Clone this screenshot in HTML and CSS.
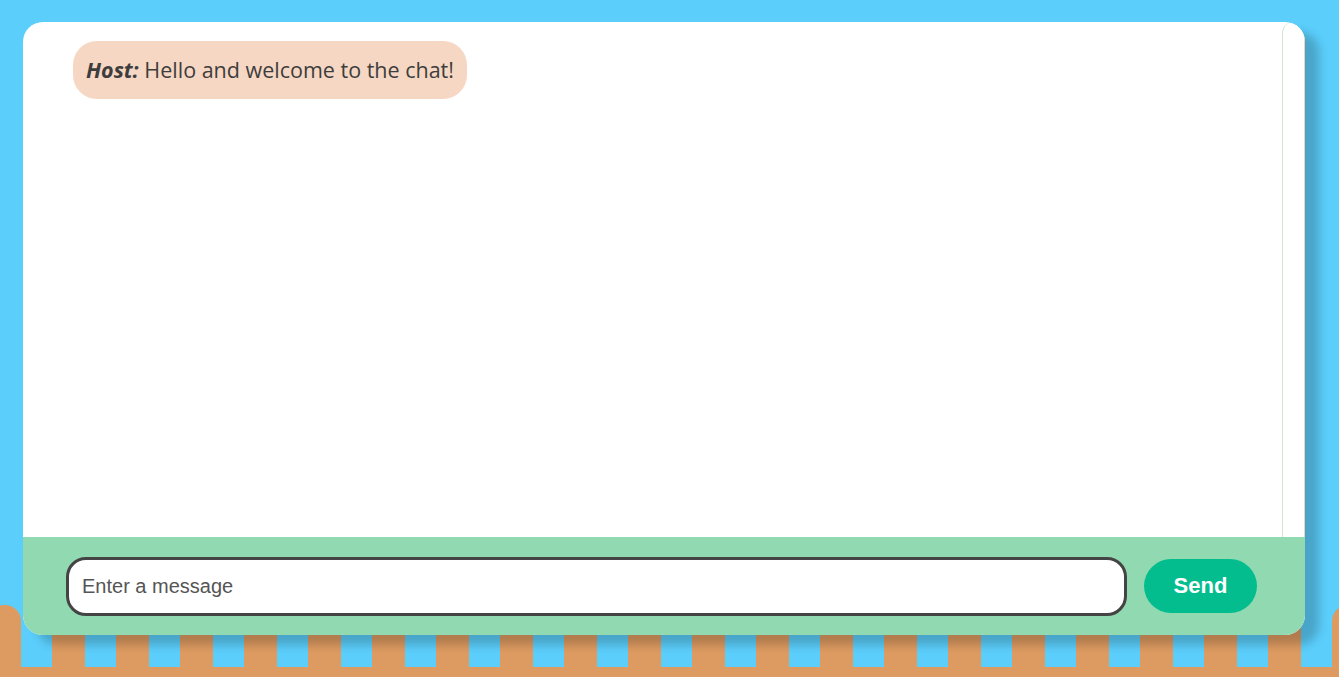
FILE: index.html
```html
<!DOCTYPE html>
<html lang="en">
<head>
<meta charset="utf-8">
<title>Chat</title>
<link rel="stylesheet" href="styles.css">
</head>
<body>
<div class="fence" aria-hidden="true">
  <div class="pickets">
    <span class="picket"></span><span class="picket"></span><span class="picket"></span><span class="picket"></span><span class="picket"></span><span class="picket"></span><span class="picket"></span><span class="picket"></span><span class="picket"></span><span class="picket"></span><span class="picket"></span><span class="picket"></span><span class="picket"></span><span class="picket"></span><span class="picket"></span><span class="picket"></span><span class="picket"></span><span class="picket"></span><span class="picket"></span><span class="picket"></span><span class="picket"></span><span class="picket"></span>
  </div>
  <div class="rail"></div>
</div>
<main class="card">
  <section class="messages">
    <div class="list">
      <div class="bubble"><b><i>Host:</i></b> Hello and welcome to the chat!</div>
    </div>
    <div class="track"></div>
  </section>
  <form class="composer">
    <input class="field" type="text" placeholder="Enter a message">
    <button class="send" type="button">Send</button>
  </form>
</main>
</body>
</html>
```
FILE: styles.css
```css
html, body {
  margin: 0;
  height: 677px;
  overflow: hidden;
}
body {
  background: #5bcefb;
  padding: 22px 34px 0 23px;
  box-sizing: border-box;
  position: relative;
}
.fence {
  position: absolute;
  left: 0;
  right: 0;
  bottom: 0;
  height: 72px;
  display: flex;
  flex-direction: column;
  z-index: 0;
  overflow: hidden;
}
.pickets {
  flex: 1;
  display: flex;
  gap: 31px;
  margin-left: -12px;
}
.picket {
  flex: 0 0 33px;
  background: #de9b61;
  border-radius: 16px 16px 0 0;
}
.rail {
  height: 10px;
  background: #de9b61;
}
.card {
  position: relative;
  z-index: 1;
  width: 1282px;
  height: 613px;
  border-radius: 20px;
  overflow: hidden;
  background: #fff;
  display: flex;
  flex-direction: column;
  box-shadow: 14px 10px 10px rgba(0, 0, 0, 0.2);
}
.messages {
  flex: 1;
  display: flex;
  min-height: 0;
}
.list {
  flex: 1;
  padding: 19px 0 0 50px;
  display: flex;
  flex-direction: column;
  align-items: flex-start;
}
.bubble {
  background: #f6d7c3;
  color: #3d3d3d;
  font-family: "Open Sans", "Noto Sans", sans-serif;
  font-size: 21.5px;
  line-height: 58px;
  height: 58px;
  padding: 0 13px;
  border-radius: 24px;
  white-space: nowrap;
}
.bubble b {
  font-weight: 700;
}
.track {
  width: 21px;
  border-left: 1px solid #cfe6cc;
  border-right: 1px solid #f2d0ba;
  border-radius: 12px 12px 0 0;
  background: #fff;
}
.composer {
  margin: 0;
  height: 98px;
  background: #91dab1;
  display: flex;
  align-items: center;
  gap: 17px;
  padding: 0 48px 0 43px;
  box-sizing: border-box;
}
.field {
  flex: 1;
  height: 59px;
  box-sizing: border-box;
  border: 3px solid #444;
  border-radius: 20px;
  padding: 0 13px;
  font-family: "Liberation Sans", Arial, sans-serif;
  font-size: 20px;
  color: #333;
  background: #fff;
  outline: none;
}
.field::placeholder {
  color: #555;
}
.send {
  width: 113px;
  height: 54px;
  border: none;
  border-radius: 27px;
  background: #04bd8f;
  color: #fff;
  font-family: "Liberation Sans", Arial, sans-serif;
  font-weight: 700;
  font-size: 22px;
  cursor: pointer;
}
```
